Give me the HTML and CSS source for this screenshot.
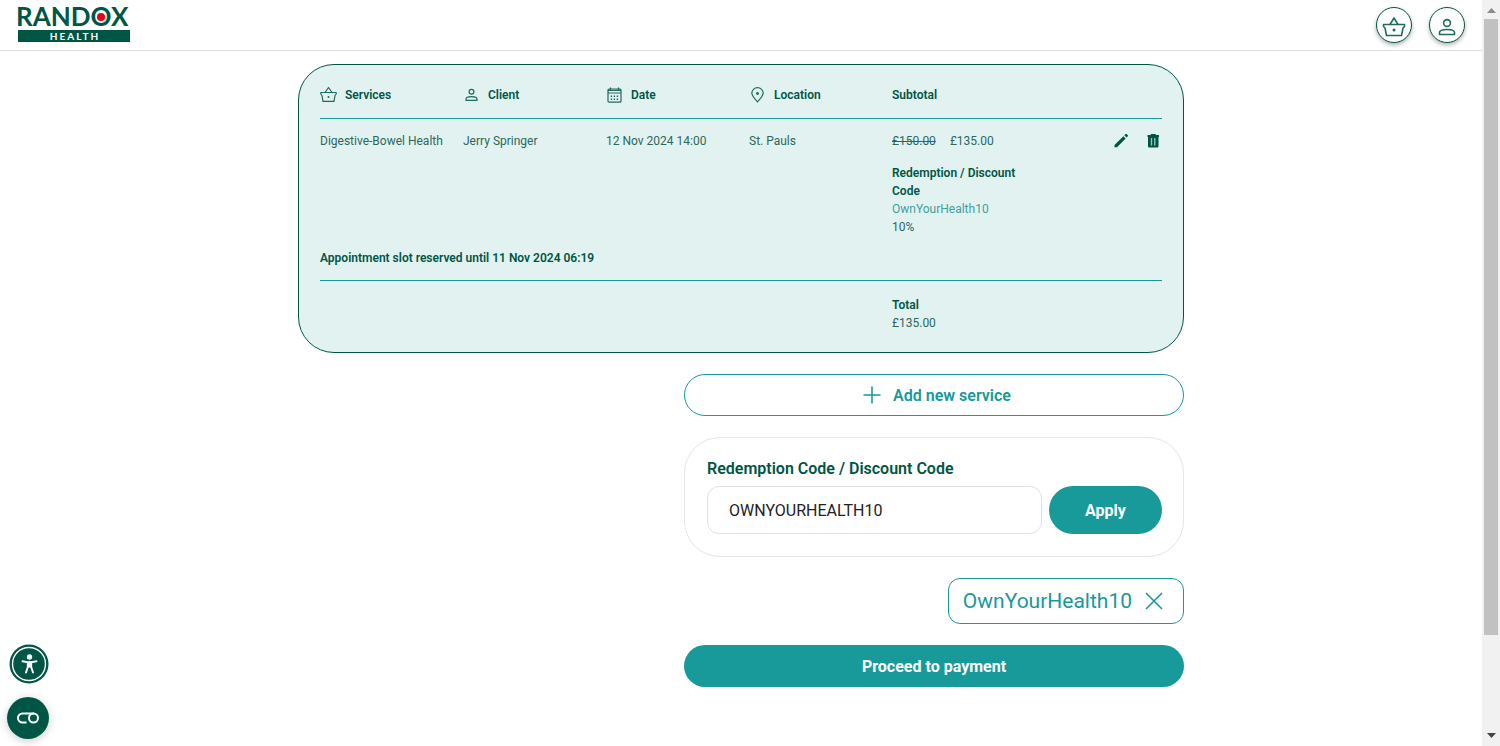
FILE: index.html
```html
<!DOCTYPE html>
<html lang="en">
<head>
    <meta charset="UTF-8">
    <meta name="viewport" content="width=device-width, initial-scale=1.0">
    <title>Basket - Randox Health</title>
    <link rel="stylesheet" href="styles.css">
</head>
<body>
    <div class="page">
        <header class="header">
            <a href="#" class="logo" aria-label="Randox Health">
                <svg width="116" height="43" viewBox="0 0 116 43">
                    <rect x="1" y="30" width="112" height="12" fill="#005645"/>
                    <text class="logo-name" x="-1" y="26">RANDOX</text>
                    <circle cx="84" cy="17" r="4" fill="#e2001a"/>
                    <text class="logo-sub" x="58" y="40">HEALTH</text>
                </svg>
            </a>
            <nav class="header-actions">
                <button type="button" class="round-button" aria-label="Basket">
                    <svg width="24" height="24" viewBox="0 0 24 24" fill="none" stroke="#1f6b5c" stroke-width="1.6" stroke-linejoin="round">
                        <path d="M1.5 9.5H22.5V11.5L21 13L19.5 20.5H4.5L3 13L1.5 11.5Z"/>
                        <path d="M8 9.5L12 3L16 9.5"/>
                        <circle cx="12" cy="15" r="1.5" fill="#1f6b5c" stroke="none"/>
                    </svg>
                </button>
                <button type="button" class="round-button" aria-label="Account">
                    <svg width="24" height="24" viewBox="0 0 24 24" fill="none" stroke="#1f6b5c" stroke-width="1.6" stroke-linejoin="round">
                        <circle cx="12" cy="8" r="3.4"/>
                        <path d="M4.500 19.500V17.500C4.500 15 8.500 14.500 12 14.500S19.500 15 19.500 17.500V19.500Z"/>
                    </svg>
                </button>
            </nav>
        </header>

        <main class="content">
            <section class="basket">
                <table class="basket-table">
                    <colgroup>
                        <col class="col-item">
                        <col class="col-item">
                        <col class="col-item">
                        <col class="col-item">
                        <col class="col-item">
                        <col>
                    </colgroup>
                    <thead>
                        <tr>
                            <th>
                                <span class="heading">
                                    <svg width="17" height="18" viewBox="0 0 17 18" fill="none" stroke="#1f6b5c" stroke-width="1.2" stroke-linejoin="round">
                                        <path d="M.8 6.5H16.2V8L15 9.5L14 15.4H3L2 9.5L.8 8Z"/>
                                        <path d="M5 6.5L8.5 1.5L12 6.5"/>
                                        <circle cx="8.5" cy="11" r="1" fill="#1f6b5c" stroke="none"/>
                                    </svg>
                                    Services
                                </span>
                            </th>
                            <th>
                                <span class="heading">
                                    <svg width="17" height="18" viewBox="0 0 17 18" fill="none" stroke="#1f6b5c" stroke-width="1.2" stroke-linejoin="round">
                                        <circle cx="8.5" cy="5.7" r="2.4"/>
                                        <path d="M3 14.4V13C3 11.2 5.5 10.6 8.5 10.6S14 11.2 14 13V14.4Z"/>
                                    </svg>
                                    Client
                                </span>
                            </th>
                            <th>
                                <span class="heading">
                                    <svg width="17" height="18" viewBox="0 0 17 18" fill="none" stroke="#1f6b5c" stroke-width="1.2">
                                        <rect x="2" y="3" width="13" height="13.2" rx="1"/>
                                        <path d="M2 4.4H15M2 7H15M4.500 1.500V4M12.500 1.500V4"/>
                                        <path d="M4.700 10.300H13M4.700 13.300H13" stroke-dasharray="1.4 1.6" stroke-width="1.4"/>
                                    </svg>
                                    Date
                                </span>
                            </th>
                            <th>
                                <span class="heading">
                                    <svg width="17" height="18" viewBox="0 0 17 18" fill="none" stroke="#1f6b5c" stroke-width="1.2">
                                        <path d="M8.500 15.800C5 12 2.800 9.500 2.800 7.200A5.700 5.500 0 0 1 14.200 7.200C14.200 9.500 12 12 8.500 15.800Z"/>
                                        <circle cx="8.500" cy="7.500" r="1.400" fill="#1f6b5c" stroke="none"/>
                                    </svg>
                                    Location
                                </span>
                            </th>
                            <th>Subtotal</th>
                            <th></th>
                        </tr>
                    </thead>
                    <tbody>
                        <tr>
                            <td>Digestive-Bowel Health</td>
                            <td>Jerry Springer</td>
                            <td>12 Nov 2024 14:00</td>
                            <td>St. Pauls</td>
                            <td>
                                <div class="prices"><s>£150.00</s><span>£135.00</span></div>
                                <div class="discount">
                                    <strong>Redemption / Discount Code</strong>
                                    <div class="discount-code">OwnYourHealth10</div>
                                    <div>10%</div>
                                </div>
                            </td>
                            <td>
                                <div class="row-actions">
                                    <button type="button" class="icon-button" aria-label="Edit">
                                        <svg width="18" height="18" viewBox="0 0 18 18" fill="#005645">
                                            <path d="M2.500 13L11.400 4.200L13.700 6.500L5 15.300H2.500ZM12.300 3.300L13.600 2.100C14 1.800 14.400 1.800 14.700 2.100L15.800 3.200C16.100 3.600 16.100 4 15.800 4.300L14.600 5.500Z"/>
                                        </svg>
                                    </button>
                                    <button type="button" class="icon-button" aria-label="Remove">
                                        <svg width="18" height="18" viewBox="0 0 18 18">
                                            <path fill="#005645" d="M3.500 3H6.500L7 2H11.500L12 3H15V5H14.500V14C14.500 15 14 15.500 13.200 15.500H5.300C4.500 15.500 4 15 4 14V5H3.500Z"/>
                                            <path stroke="#9bc6be" stroke-width="1.3" d="M7.500 6V13.500M10.800 6V13.500"/>
                                        </svg>
                                    </button>
                                </div>
                            </td>
                        </tr>
                        <tr class="slot-row">
                            <td colspan="6"><strong>Appointment slot reserved until 11 Nov 2024 06:19</strong></td>
                        </tr>
                    </tbody>
                    <tfoot>
                        <tr>
                            <td colspan="4"></td>
                            <td colspan="2"><strong>Total</strong><div>£135.00</div></td>
                        </tr>
                    </tfoot>
                </table>
            </section>

            <section class="checkout">
                <button type="button" class="button button-outline">
                    <svg width="18" height="18" viewBox="0 0 18 18" stroke="#18999a" stroke-width="1.6">
                        <path d="M9 .5V17.500M.5 9H17.500"/>
                    </svg>
                    Add new service
                </button>

                <form class="code-form">
                    <label for="discountCode">Redemption Code / Discount Code</label>
                    <div class="code-row">
                        <input type="text" id="discountCode" value="OWNYOURHEALTH10">
                        <button type="button" class="button button-apply">Apply</button>
                    </div>
                </form>

                <div class="applied-code">
                    <span>OwnYourHealth10</span>
                    <button type="button" class="icon-button" aria-label="Remove code">
                        <svg width="18" height="18" viewBox="0 0 18 18" stroke="#18999a" stroke-width="1.6">
                            <path d="M1 1L17 17M17 1L1 17"/>
                        </svg>
                    </button>
                </div>

                <button type="button" class="button button-primary">Proceed to payment</button>
            </section>
        </main>
    </div>

    <!-- page scrollbar -->
    <div class="scrollbar">
        <svg width="9" height="5" viewBox="0 0 9 5"><path fill="#8a8a8a" d="M4.500 0L9 5H0Z"/></svg>
        <div class="scrollbar-track"><div class="scrollbar-thumb"></div></div>
        <svg width="9" height="5" viewBox="0 0 9 5"><path fill="#444" d="M4.500 5L9 0H0Z"/></svg>
    </div>

    <!-- floating widgets -->
    <div class="widgets">
        <button type="button" class="icon-button" aria-label="Accessibility">
            <svg width="40" height="40" viewBox="0 0 40 40">
                <circle cx="20" cy="20" r="19.5" fill="#005645"/>
                <circle cx="20" cy="20" r="16.5" fill="none" stroke="#fff" stroke-width="1.4"/>
                <circle cx="20.500" cy="13" r="2.700" fill="#fff"/>
                <path d="M13.500 17.300L18.500 18.200H22.500L27.500 17.300M18.800 18.500V23L17 28.500M22.200 18.500V23L24 28.500" fill="none" stroke="#fff" stroke-width="1.9" stroke-linecap="round"/>
                <path d="M18 17.500H23V23.500H18Z" fill="#fff"/>
            </svg>
        </button>
        <button type="button" class="icon-button consent" aria-label="Cookie settings">
            <svg width="42" height="42" viewBox="0 0 42 42">
                <circle cx="21" cy="21" r="21" fill="#005645"/>
                <g fill="none" stroke="#fff" stroke-width="2">
                    <path d="M19.500 25.500H15.500A4.500 4.500 0 0 1 15.500 16.500H27"/>
                    <circle cx="26.500" cy="21" r="4.500"/>
                </g>
            </svg>
        </button>
    </div>
</body>
</html>
```
FILE: styles.css
```css
* {
    box-sizing: border-box;
}
body {
    margin: 0;
    min-height: 100vh;
    display: flex;
    font-family: Roboto, "Liberation Sans", sans-serif;
    font-size: 12px;
    line-height: 18px;
    color: #2c685d;
    background-color: white;
}
button {
    font-family: inherit;
    cursor: pointer;
}
svg {
    display: block;
    flex: none;
}
strong {
    font-weight: 600;
    color: #005645;
}
.page {
    flex: 1;
    min-width: 0;
}
.header {
    display: flex;
    justify-content: space-between;
    padding: 0 17px;
    height: 51px;
    border-bottom: 1px solid #ddd;
}
.logo-name {
    font-family: Lato, sans-serif;
    font-size: 26px;
    font-weight: 700;
    fill: #005645;
}
.logo-sub {
    font-family: Lato, sans-serif;
    font-size: 10px;
    font-weight: 700;
    letter-spacing: 2px;
    text-anchor: middle;
    fill: white;
}
.header-actions {
    display: flex;
    align-items: center;
    gap: 17px;
}
.round-button {
    display: flex;
    align-items: center;
    justify-content: center;
    width: 36px;
    height: 36px;
    padding: 4px 0 0;
    background-color: white;
    border: 1px solid #005645;
    border-radius: 50%;
    box-shadow: 0 2px 4px rgba(0, 0, 0, 0.3);
}
.content {
    max-width: 886px;
    margin: 0 auto;
    padding-top: 13px;
}
.basket {
    padding: 21px 21px 20px;
    background-color: #e2f2f1;
    border: 1px solid #005645;
    border-radius: 36px;
}
.basket-table {
    width: 100%;
    table-layout: fixed;
    border-collapse: separate;
    border-spacing: 0;
}
.col-item {
    width: 143px;
}
.basket-table th {
    padding: 0 0 14px;
    text-align: left;
    font-weight: 600;
    color: #005645;
    border-bottom: 1px solid #18999a;
}
.basket-table td {
    padding: 13px 0 0;
    vertical-align: top;
}
.basket-table .slot-row td {
    padding-bottom: 13px;
    border-bottom: 1px solid #18999a;
}
.basket-table tfoot td {
    padding-top: 15px;
}
.heading {
    display: flex;
    align-items: center;
    gap: 8px;
}
.prices {
    display: flex;
    gap: 14px;
}
.discount {
    padding: 14px 10px 0 0;
}
.discount strong {
    display: block;
}
.discount-code {
    color: #3fa0a1;
}
.row-actions {
    display: flex;
    justify-content: flex-end;
    gap: 14px;
}
.icon-button {
    padding: 0;
    background: none;
    border: none;
}
.checkout {
    display: flex;
    flex-direction: column;
    gap: 21px;
    max-width: 500px;
    margin: 21px 0 0 auto;
}
.button {
    display: flex;
    align-items: center;
    justify-content: center;
    gap: 12px;
    height: 42px;
    font-size: 16px;
    border: none;
    border-radius: 24px;
}
.button-outline {
    padding-left: 12px;
    font-weight: 600;
    color: #18999a;
    background-color: white;
    border: 1px solid #18999a;
}
.button-primary,
.button-apply {
    font-weight: 700;
    color: white;
    background-color: #18999a;
}
.code-form {
    padding: 21px 21px 22px 22px;
    border: 1px solid #e6e6e6;
    border-radius: 36px;
}
.code-form label {
    display: block;
    margin-bottom: 7px;
    font-size: 16px;
    line-height: 20px;
    font-weight: 600;
    color: #005645;
}
.code-row {
    display: flex;
    gap: 7px;
}
.code-row input {
    flex: 1;
    min-width: 0;
    height: 48px;
    padding: 0 21px;
    font-family: inherit;
    font-size: 16px;
    color: #222;
    border: 1px solid #e2e2e2;
    border-radius: 12px;
}
.button-apply {
    width: 113px;
    height: 48px;
}
.applied-code {
    display: flex;
    align-items: center;
    align-self: flex-end;
    gap: 13px;
    height: 46px;
    padding: 0 20px 0 14px;
    font-size: 21px;
    color: #18999a;
    border: 1px solid #18999a;
    border-radius: 12px;
}
.scrollbar {
    display: flex;
    flex-direction: column;
    align-items: center;
    gap: 6px;
    width: 18px;
    height: 100vh;
    padding: 8px 0;
    background-color: #f1f1f1;
}
.scrollbar-track {
    flex: 1;
    width: 14px;
}
.scrollbar-thumb {
    height: 87%;
    background-color: #c1c1c1;
}
.widgets {
    position: fixed;
    left: 7px;
    bottom: 7px;
    display: flex;
    flex-direction: column;
    align-items: flex-end;
    gap: 13px;
}
.consent {
    border-radius: 50%;
    box-shadow: 0 2px 10px rgba(0, 0, 0, 0.2);
}
```
